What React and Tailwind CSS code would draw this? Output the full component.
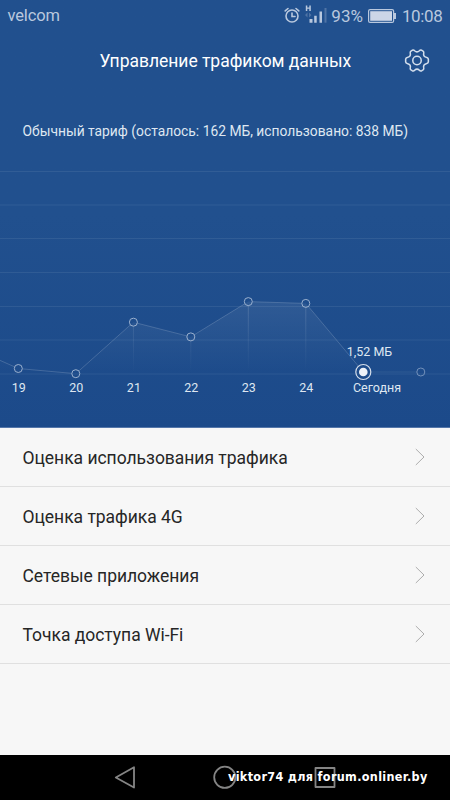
import React from 'react';

const points = [
  { x: -39, y: 343 },
  { x: 18.3, y: 368.5, label: '19' },
  { x: 75.8, y: 373.7, label: '20' },
  { x: 133.4, y: 322.2, label: '21' },
  { x: 190.8, y: 336.9, label: '22' },
  { x: 248.3, y: 301.6, label: '23' },
  { x: 305.8, y: 303.4, label: '24' },
  { x: 363.3, y: 372, label: 'Сегодня', today: true },
  { x: 420.8, y: 372, future: true },
];

const gridLines = [171.5, 205, 238.5, 272.5, 306.5, 340, 374];

const rows = [
  'Оценка использования трафика',
  'Оценка трафика 4G',
  'Сетевые приложения',
  'Точка доступа Wi-Fi',
];

const StatusBar = () => (
  <div className="flex h-8 items-center px-[7.5px] text-[17px] leading-8 text-[#b9c8de]">
    <span className="text-[16.5px] tracking-[-0.15px]">velcom</span>
    <svg className="ml-auto" width="16" height="18" viewBox="0 0 16 18" fill="none" stroke="currentColor" strokeWidth="1.6" strokeLinecap="round">
      <circle cx="8" cy="9" r="6" />
      <path d="M1.2 3.900 4 1.500M14.8 3.900 12 1.500M8 6v3.500h3" />
    </svg>
    <svg className="ml-[5px]" width="22" height="24" viewBox="0 0 22 24" fill="currentColor">
      <path d="M.8 1.500h1.500v2h2V1.500h1.500V7H4.300V4.800h-2V7H.8z" />
      <path d="M0 11l2.500-2.500v5zM6.500 11 4 8.500v5z" opacity=".3" />
      <path d="M4.500 15h3v3.700h-3zM9.200 11.800h2.500v6.900H9.200zM14.500 7.500H17v11.200h-2.500z" />
      <path d="M19.500 4h2v14.700h-2z" opacity=".3" />
    </svg>
    <span className="ml-[4px]">93%</span>
    <svg className="ml-[5px]" width="28" height="14" viewBox="0 0 28 14">
      <rect x=".6" y=".6" width="25" height="12.8" rx="1.500" fill="none" stroke="currentColor" strokeWidth="1.2" />
      <rect x="2.200" y="2.200" width="21.800" height="9.600" fill="#ccd6e7" />
      <path d="M26 4h2v6h-2z" fill="currentColor" />
    </svg>
    <span className="ml-[6px] tracking-[-0.35px]">10:08</span>
  </div>
);

const GearIcon = () => (
  <svg width="26" height="25" viewBox="0 0 26 26" fill="none" stroke="#d3deec" strokeWidth="1.6" strokeLinejoin="round">
    <path d="M10.500 2.800Q13 5.200 15.500 2.800Q16.500 1.700 18 2.400L19.300 3.200Q20.400 4 20 5.500Q19.200 8.800 22.600 9.700Q24.700 10.200 24.800 11.600V14.400Q24.700 15.800 22.600 16.300Q19.200 17.200 20 20.500Q20.400 22 19.300 22.800L18 23.600Q16.500 24.300 15.500 23.200Q13 20.800 10.500 23.200Q9.500 24.300 8 23.600L6.700 22.800Q5.600 22 6 20.500Q6.800 17.200 3.400 16.300Q1.300 15.800 1.200 14.400V11.600Q1.300 10.200 3.400 9.700Q6.800 8.800 6 5.500Q5.600 4 6.700 3.200L8 2.400Q9.500 1.700 10.500 2.800Z" />
    <circle cx="13" cy="13" r="4.4" />
  </svg>
);

const TrafficChart = () => {
  const past = points.filter((p) => !p.future);
  const line = past.map((p) => `${p.x},${p.y}`).join(' ');

  return (
    <svg className="block" width="450" height="276" viewBox="0 151 450 276">
      <defs>
        <linearGradient id="area" x1="0" y1="300" x2="0" y2="372" gradientUnits="userSpaceOnUse">
          <stop offset="0" stopColor="#fff" stopOpacity=".075" />
          <stop offset="1" stopColor="#fff" stopOpacity="0" />
        </linearGradient>
        <linearGradient id="drop" x1="0" y1="305" x2="0" y2="374" gradientUnits="userSpaceOnUse">
          <stop offset="0" stopColor="#fff" stopOpacity=".15" />
          <stop offset="1" stopColor="#fff" stopOpacity="0" />
        </linearGradient>
        {/* Keeps the lines out of the hollow markers */}
        <mask id="markers" maskUnits="userSpaceOnUse" x="0" y="151" width="450" height="276">
          <rect y="151" width="450" height="276" fill="#fff" />
          {points.map((p) => (
            <circle key={p.x} cx={p.x} cy={p.y} r={p.today ? 7.5 : 4} fill="#000" />
          ))}
        </mask>
      </defs>

      {gridLines.map((y) => (
        <path key={y} d={`M0 ${y}H450`} stroke="#fff" strokeOpacity=".075" />
      ))}

      <polygon points={`${line} 363,374 -39,374`} fill="url(#area)" />
      <g mask="url(#markers)">
        {past.slice(3, 7).map((p) => (
          <rect key={p.x} x={p.x - 0.5} y={p.y} width="1" height={374 - p.y} fill="url(#drop)" />
        ))}
        <polyline points={line} fill="none" stroke="#fff" strokeOpacity=".17" />
        <path d="M363 372H421" stroke="#fff" strokeOpacity=".04" strokeWidth="2" />
      </g>

      {points.map((p) =>
        p.today ? (
          <g key={p.x}>
            <circle cx={p.x} cy={p.y} r="7.5" fill="none" stroke="#d5deeb" strokeWidth="1.2" />
            <circle cx={p.x} cy={p.y} r="4.3" fill="#eef2f8" />
          </g>
        ) : (
          <circle key={p.x} cx={p.x} cy={p.y} r="4" fill="none" stroke={p.future ? '#7391bb' : '#9bb1cf'} />
        )
      )}

      <g fill="#dfe7f1" fontSize="12.5" textAnchor="middle">
        {points.filter((p) => p.label).map((p) => (
          <text key={p.label} x={p.today ? 377 : p.x + 0.5} y="392">{p.label}</text>
        ))}
        <text x="369.5" y="355.5">1,52 МБ</text>
      </g>
    </svg>
  );
};

const MenuRow = ({ label }) => (
  <div className="flex h-[59px] items-center border-b border-[#e0e0e0] pl-[22.5px] pr-[25px] text-[17.5px] tracking-[-0.03px] text-[#262626]">
    <span className="pt-[2px]">{label}</span>
    <svg className="ml-auto" width="10" height="18" viewBox="0 0 10 18" fill="none" stroke="#adadad">
      <path d="M.8 1 9 9 .8 17" />
    </svg>
  </div>
);

const NavBar = () => (
  <div className="relative h-[45px] bg-black">
    <svg className="block" width="450" height="45" fill="none" stroke="#858585" strokeWidth="1.8" strokeLinejoin="round">
      <path d="M115.800 22.500 134 12.300V32.500Z" />
      <circle cx="224.800" cy="22.300" r="10.600" />
      <rect x="315.500" y="13" width="19" height="19" />
    </svg>
    <span className="absolute left-[228px] top-[12px] whitespace-nowrap font-['DejaVu_Sans_Condensed','DejaVu_Sans',sans-serif] text-[12.5px] font-bold leading-5 tracking-[0.33px] text-white">
      viktor74 для forum.onliner.by
    </span>
  </div>
);

const App = () => {
  return (
    <div className="flex h-[800px] w-[450px] flex-col overflow-hidden bg-[#f7f7f7] font-[Roboto,sans-serif]">
      <div className="h-[428px] border-b border-[#5577aa] bg-linear-to-b from-[#21508e] via-[#21508e] to-[#1c4a8a]">
        <StatusBar />
        <div className="flex h-[57px] items-center pl-[99.5px] pr-[20px]">
          <h1 className="pt-[2px] text-[17.5px] tracking-[-0.03px] text-white">Управление трафиком данных</h1>
          <div className="ml-auto">
            <GearIcon />
          </div>
        </div>
        <p className="h-[62px] whitespace-nowrap pl-[22.5px] pt-[32px] text-[13.83px] leading-[20px] text-[#dfe7f1]">
          Обычный тариф (осталось: 162 МБ, использовано: 838 МБ)
        </p>
        <TrafficChart />
      </div>
      <div className="flex-1">
        {rows.map((label) => (
          <MenuRow key={label} label={label} />
        ))}
      </div>
      <NavBar />
    </div>
  );
};

export default App;
